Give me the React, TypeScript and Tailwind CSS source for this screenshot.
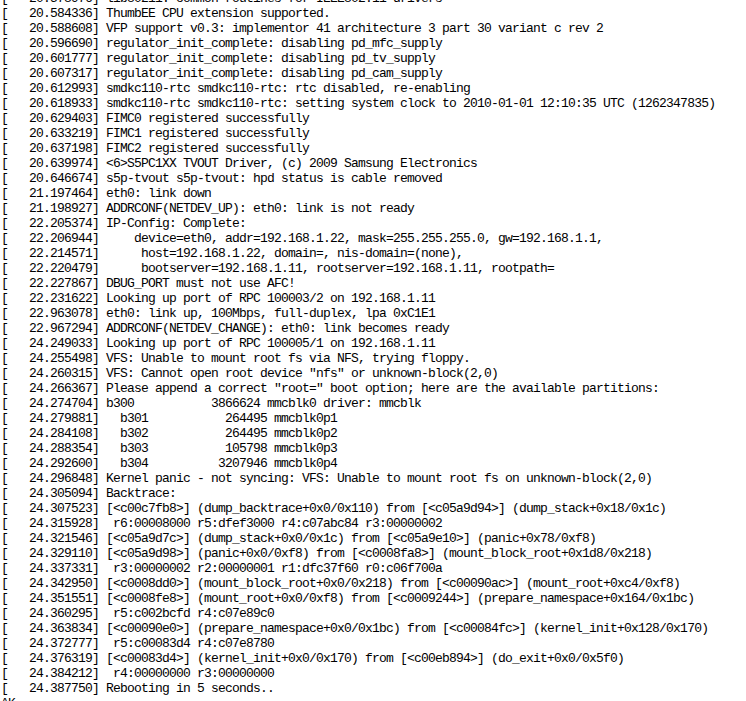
const lines: string[] = [
  '[   20.578976] lib80211: common routines for IEEE802.11 drivers',
  '[   20.584336] ThumbEE CPU extension supported.',
  '[   20.588608] VFP support v0.3: implementor 41 architecture 3 part 30 variant c rev 2',
  '[   20.596690] regulator_init_complete: disabling pd_mfc_supply',
  '[   20.601777] regulator_init_complete: disabling pd_tv_supply',
  '[   20.607317] regulator_init_complete: disabling pd_cam_supply',
  '[   20.612993] smdkc110-rtc smdkc110-rtc: rtc disabled, re-enabling',
  '[   20.618933] smdkc110-rtc smdkc110-rtc: setting system clock to 2010-01-01 12:10:35 UTC (1262347835)',
  '[   20.629403] FIMC0 registered successfully',
  '[   20.633219] FIMC1 registered successfully',
  '[   20.637198] FIMC2 registered successfully',
  '[   20.639974] <6>S5PC1XX TVOUT Driver, (c) 2009 Samsung Electronics',
  '[   20.646674] s5p-tvout s5p-tvout: hpd status is cable removed',
  '[   21.197464] eth0: link down',
  '[   21.198927] ADDRCONF(NETDEV_UP): eth0: link is not ready',
  '[   22.205374] IP-Config: Complete:',
  '[   22.206944]     device=eth0, addr=192.168.1.22, mask=255.255.255.0, gw=192.168.1.1,',
  '[   22.214571]      host=192.168.1.22, domain=, nis-domain=(none),',
  '[   22.220479]      bootserver=192.168.1.11, rootserver=192.168.1.11, rootpath=',
  '[   22.227867] DBUG_PORT must not use AFC!',
  '[   22.231622] Looking up port of RPC 100003/2 on 192.168.1.11',
  '[   22.963078] eth0: link up, 100Mbps, full-duplex, lpa 0xC1E1',
  '[   22.967294] ADDRCONF(NETDEV_CHANGE): eth0: link becomes ready',
  '[   24.249033] Looking up port of RPC 100005/1 on 192.168.1.11',
  '[   24.255498] VFS: Unable to mount root fs via NFS, trying floppy.',
  '[   24.260315] VFS: Cannot open root device "nfs" or unknown-block(2,0)',
  '[   24.266367] Please append a correct "root=" boot option; here are the available partitions:',
  '[   24.274704] b300           3866624 mmcblk0 driver: mmcblk',
  '[   24.279881]   b301           264495 mmcblk0p1',
  '[   24.284108]   b302           264495 mmcblk0p2',
  '[   24.288354]   b303           105798 mmcblk0p3',
  '[   24.292600]   b304          3207946 mmcblk0p4',
  '[   24.296848] Kernel panic - not syncing: VFS: Unable to mount root fs on unknown-block(2,0)',
  '[   24.305094] Backtrace:',
  '[   24.307523] [<c00c7fb8>] (dump_backtrace+0x0/0x110) from [<c05a9d94>] (dump_stack+0x18/0x1c)',
  '[   24.315928]  r6:00008000 r5:dfef3000 r4:c07abc84 r3:00000002',
  '[   24.321546] [<c05a9d7c>] (dump_stack+0x0/0x1c) from [<c05a9e10>] (panic+0x78/0xf8)',
  '[   24.329110] [<c05a9d98>] (panic+0x0/0xf8) from [<c0008fa8>] (mount_block_root+0x1d8/0x218)',
  '[   24.337331]  r3:00000002 r2:00000001 r1:dfc37f60 r0:c06f700a',
  '[   24.342950] [<c0008dd0>] (mount_block_root+0x0/0x218) from [<c00090ac>] (mount_root+0xc4/0xf8)',
  '[   24.351551] [<c0008fe8>] (mount_root+0x0/0xf8) from [<c0009244>] (prepare_namespace+0x164/0x1bc)',
  '[   24.360295]  r5:c002bcfd r4:c07e89c0',
  '[   24.363834] [<c00090e0>] (prepare_namespace+0x0/0x1bc) from [<c00084fc>] (kernel_init+0x128/0x170)',
  '[   24.372777]  r5:c00083d4 r4:c07e8780',
  '[   24.376319] [<c00083d4>] (kernel_init+0x0/0x170) from [<c00eb894>] (do_exit+0x0/0x5f0)',
  '[   24.384212]  r4:00000000 r3:00000000',
  '[   24.387750] Rebooting in 5 seconds..',
  '^K',
];

export default function App() {
  return (
    <div className="h-[701px] w-[746px] overflow-hidden bg-white">
      <pre className="-mt-[9px] pl-[1px] font-['Liberation_Mono',monospace] text-[13px] leading-[15px] tracking-[-0.8px] text-black">
        {lines.map((line, i) => (
          <div key={i}>{line}</div>
        ))}
      </pre>
    </div>
  );
}
